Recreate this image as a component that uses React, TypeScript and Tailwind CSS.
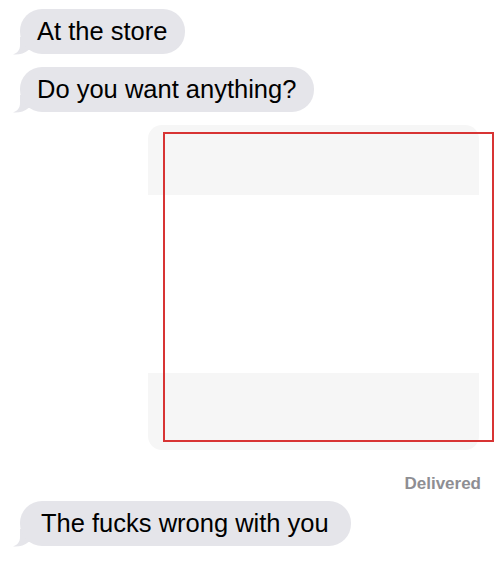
const Tail = () => (
  <svg
    className="absolute left-[-7px] bottom-[-1px]"
    width="22"
    height="18"
    viewBox="0 0 22 18"
  >
    <path d="M7 0 L7 8 C7 13 4.5 16 0 17.5 C6 18 11.5 16.5 15.5 13 L22 13 L22 0 Z" fill="#e5e5ea" />
  </svg>
);

const Bubble = ({ text, pad, className = "" }: { text: string; pad: string; className?: string }) => (
  <div className={`relative self-start ml-[20px] ${className}`}>
    <Tail />
    <div
      className={`relative h-[45px] flex items-center rounded-[22px] bg-[#e5e5ea] text-[25.5px] leading-none text-black ${pad}`}
    >
      {text}
    </div>
  </div>
);

export default function App() {
  return (
    <div
      className="relative w-[500px] h-[561px] overflow-hidden bg-white flex flex-col pt-[9px]"
      style={{ fontFamily: '"Liberation Sans", Arial, sans-serif' }}
    >
      <Bubble text="At the store" pad="pl-[17px] pr-[18px]" />
      <Bubble text="Do you want anything?" pad="pl-[17px] pr-[18px]" className="mt-[13px]" />

      <div className="relative mt-[13px] ml-[148px] w-[331px] h-[325px] rounded-[14px] overflow-hidden flex flex-col bg-white">
        <div className="h-[70px] bg-[#f6f6f6]" />
        <div className="flex-1 bg-white" />
        <div className="h-[77px] bg-[#f6f6f6]" />
      </div>
      <div className="absolute left-[163px] top-[132px] w-[331px] h-[310px] border-2 border-[#d83434]" />

      <div className="mt-[24px] self-end mr-[19px] text-[17px] leading-[20px] font-bold text-[#8e8e93]">
        Delivered
      </div>

      <Bubble text="The fucks wrong with you" pad="pl-[21px] pr-[22px]" className="mt-[7px]" />
    </div>
  );
}
